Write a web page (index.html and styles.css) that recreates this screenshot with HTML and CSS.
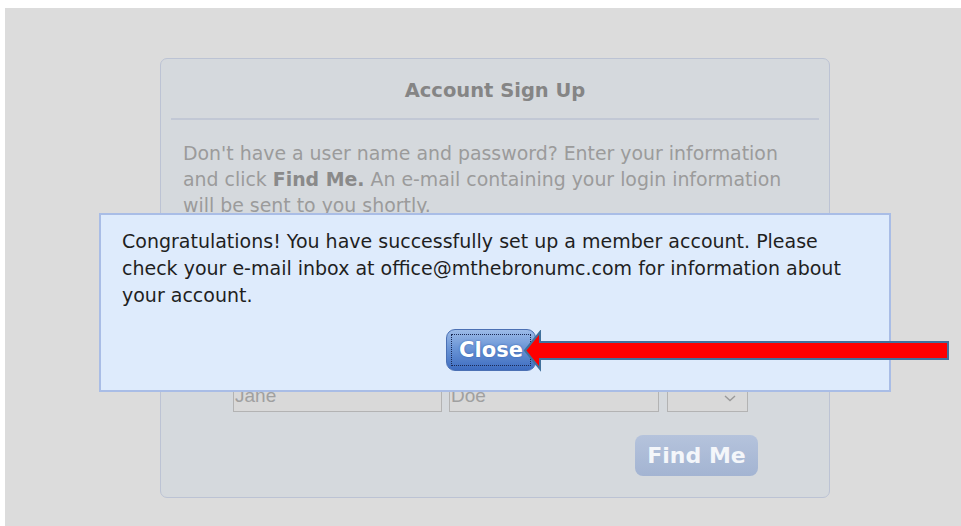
FILE: index.html
```html
<!DOCTYPE html>
<html lang="en">
<head>
<meta charset="utf-8">
<title>Account Sign Up</title>
<link rel="stylesheet" href="styles.css">
</head>
<body>
<div class="page">
  <section class="panel">
    <header class="panel-head">Account Sign Up</header>
    <p class="intro">Don't have a user name and password? Enter your information<br>and click <b>Find Me.</b> An e-mail containing your login information<br>will be sent to you shortly.</p>
    <div class="fields">
      <div class="labels">
        <span class="lbl lbl-first">First Name</span>
        <span class="lbl lbl-last">Last Name</span>
        <span class="lbl">Suffix</span>
      </div>
      <div class="inputs">
        <div class="field field-first">Jane</div>
        <div class="field field-last">Doe</div>
        <div class="field field-suffix">
          <svg class="chev" width="12" height="7" viewBox="0 0 12 7"><path d="M1 1 L6 5.5 L11 1" fill="none" stroke="#9a9a9a" stroke-width="1.4"/></svg>
        </div>
      </div>
    </div>
    <div class="actions">
      <span class="btn-find">Find Me</span>
    </div>
  </section>

  <div class="dialog">
    <p class="dialog-msg">Congratulations! You have successfully set up a member account. Please<br>check your e-mail inbox at office@mthebronumc.com for information about<br>your account.</p>
    <div class="dialog-actions">
      <span class="btn-close"><span class="focus-ring">Close</span></span>
    </div>
  </div>

  <svg class="pointer" width="430" height="44" viewBox="0 0 430 44">
    <polygon points="3,20.5 18,2 18,12 426,12 426,29 18,29 18,39" fill="#ff0000" stroke="#41719c" stroke-width="2" stroke-linejoin="miter"/>
  </svg>
</div>
</body>
</html>
```

FILE: styles.css
```css
html, body {
  margin: 0;
  padding: 0;
  background: #ffffff;
}

.page {
  position: relative;
  margin: 8px 0 0 5px;
  height: 518px;
  background: #dcdcdc;
  overflow: hidden;
  font-family: "DejaVu Sans", "Liberation Sans", sans-serif;
}

/* sign-up card */
.panel {
  box-sizing: border-box;
  margin: 50px 0 0 155px;
  width: 670px;
  height: 440px;
  border: 1px solid #bcc3d4;
  border-radius: 7px;
  background: #d5d9dd;
  display: flex;
  flex-direction: column;
}

.panel-head {
  height: 61px;
  margin: 0 10px;
  padding-top: 4px;
  box-sizing: border-box;
  border-bottom: 2px solid #c2c8d5;
  display: flex;
  align-items: center;
  justify-content: center;
  font-weight: bold;
  font-size: 19.5px;
  color: #858585;
}

.intro {
  margin: 20px 0 0 22px;
  font-size: 18.9px;
  line-height: 26px;
  color: #9b9b9b;
  white-space: nowrap;
}

.intro b {
  color: #8a8a8a;
}

.fields {
  margin: 136px 0 0 72px;
}

.labels {
  display: flex;
  height: 30px;
  align-items: center;
  font-size: 14px;
  color: #9b9b9b;
}

.lbl-first { width: 216px; }
.lbl-last { width: 217px; }

.inputs {
  display: flex;
  gap: 7px;
}

.field {
  box-sizing: border-box;
  height: 28px;
  border: 1px solid #b3b3b3;
  background: #d9d9d9;
  font-family: "Liberation Sans", sans-serif;
  font-size: 19px;
  line-height: 22px;
  padding-left: 1px;
  color: #a0a0a0;
}

.field-first { width: 209px; }
.field-last { width: 210px; }
.field-suffix {
  width: 81px;
  margin-left: 1px;
  display: flex;
  align-items: center;
  justify-content: flex-end;
  padding-right: 11px;
}

.actions {
  display: flex;
  justify-content: flex-end;
  margin: 23px 71px 0 0;
}

.btn-find {
  width: 123px;
  height: 41px;
  border-radius: 8px;
  background: linear-gradient(#b5c3dc, #a3b4d2);
  color: #f4f6fa;
  font-weight: bold;
  font-size: 22px;
  display: flex;
  align-items: center;
  justify-content: center;
}

/* confirmation message box */
.dialog {
  position: absolute;
  left: 94px;
  top: 205px;
  box-sizing: border-box;
  width: 792px;
  height: 179px;
  border: 2px solid #a9bde6;
  background: #deebfc;
  padding: 13px 0 0 21px;
}

.dialog-msg {
  margin: 0;
  font-size: 19px;
  line-height: 27px;
  color: #1f1f1f;
  white-space: nowrap;
}

.dialog-actions {
  display: flex;
  margin: 20px 0 0 324px;
}

.btn-close {
  box-sizing: border-box;
  width: 90px;
  height: 42px;
  border-radius: 9px;
  border: 1px solid #4b70b4;
  background: linear-gradient(#9cbbe8 0%, #6b95d6 45%, #3d6cc0 100%);
  padding: 4px;
  display: flex;
}

.focus-ring {
  flex: 1;
  border: 1px dotted #1c2a55;
  display: flex;
  align-items: center;
  justify-content: center;
  color: #ffffff;
  font-weight: bold;
  font-size: 21px;
  text-shadow: 0 0 2px #2e5aa8;
}

/* annotation arrow laid over the dialog */
.pointer {
  position: absolute;
  left: 517px;
  top: 322px;
}
```
